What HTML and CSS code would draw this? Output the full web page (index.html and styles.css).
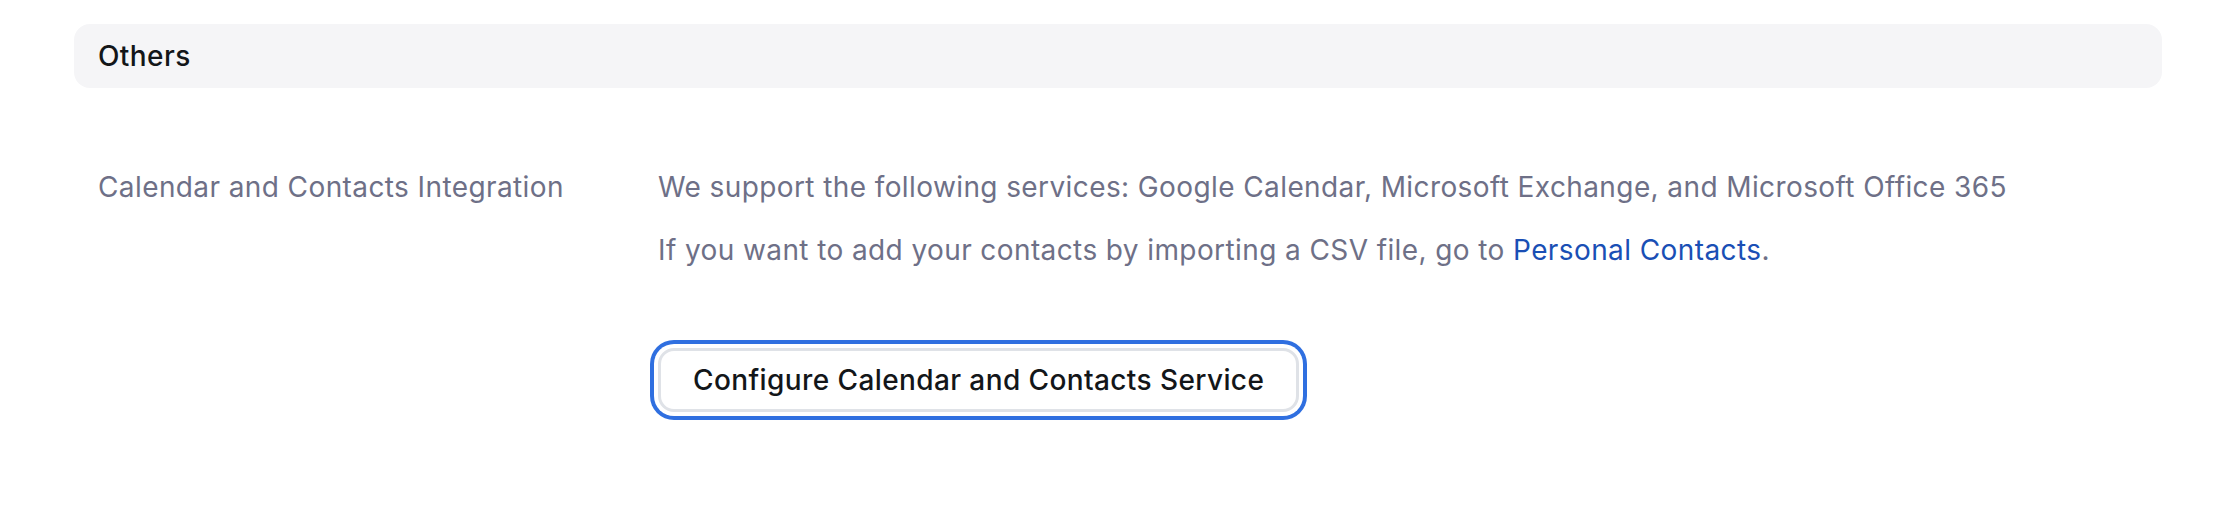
FILE: index.html
```html
<!DOCTYPE html>
<html lang="en">
<head>
<meta charset="utf-8">
<title>Others</title>
<link rel="stylesheet" href="styles.css">
</head>
<body>
<div class="page">
  <section class="section">
    <div class="section-header">Others</div>
    <div class="setting-row">
      <div class="setting-label">Calendar and Contacts Integration</div>
      <div class="setting-body">
        <p class="setting-text">We support the following services: Google Calendar, Microsoft Exchange, and Microsoft Office 365</p>
        <p class="setting-text">If you want to add your contacts by importing a CSV file, go to <a class="link" href="#">Personal Contacts</a>.</p>
        <button class="btn" type="button">Configure Calendar and Contacts Service</button>
      </div>
    </div>
  </section>
</div>
</body>
</html>
```
FILE: styles.css
```css
* { box-sizing: border-box; }
html, body { margin: 0; padding: 0; background: #ffffff; }
body {
  font-family: Inter, "Noto Sans", "Liberation Sans", sans-serif;
  font-size: 28px;
  letter-spacing: 0.4px;
  color: #6e7087;
}
.page {
  padding: 24px 54px 110px 74px;
}
.section-header {
  height: 64px;
  line-height: 64px;
  background: #f5f5f7;
  border-radius: 16px;
  padding-left: 24px;
  color: #131619;
  font-weight: 500;
}
.setting-row {
  display: flex;
  margin-top: 77px;
  padding-left: 24px;
}
.setting-label {
  width: 560px;
  flex: none;
  line-height: 44px;
}
.setting-body {
  display: flex;
  flex-direction: column;
  align-items: flex-start;
}
.setting-text {
  margin: 0 0 19px 0;
  line-height: 44px;
}
.link {
  color: #1a4fb5;
  text-decoration: none;
}
.btn {
  margin-top: 57px;
  height: 64px;
  padding: 0 32px;
  font-family: inherit;
  font-size: 28px;
  letter-spacing: 0.4px;
  font-weight: 500;
  color: #131619;
  background: #ffffff;
  border: 3px solid #dfe2e7;
  border-radius: 16px;
  box-shadow: 0 0 0 4px #ffffff, 0 0 0 8px #2f6fe0;
  cursor: pointer;
}
```
